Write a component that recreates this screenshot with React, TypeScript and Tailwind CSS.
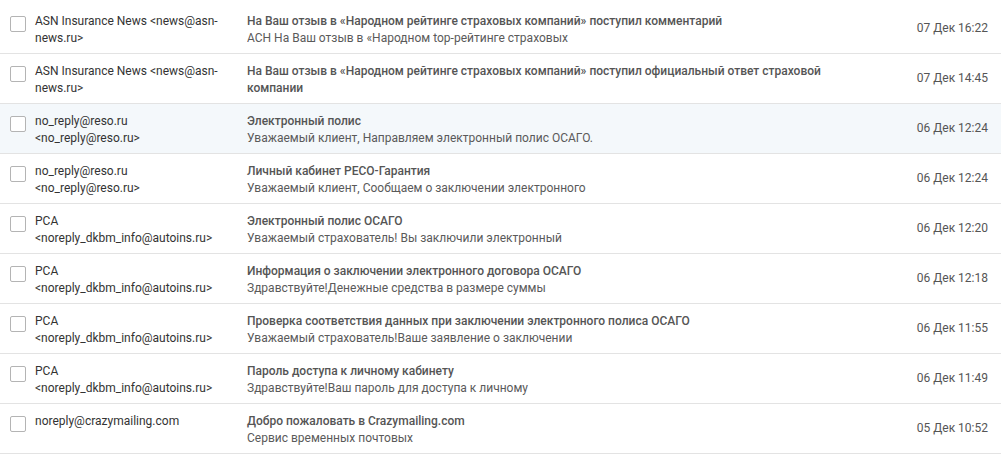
const messages = [
  {
    from: "ASN Insurance News <news@asn-news.ru>",
    subject: "На Ваш отзыв в «Народном рейтинге страховых компаний» поступил комментарий",
    preview: "АСН На Ваш отзыв в «Народном top-рейтинге страховых",
    date: "07 Дек 16:22",
  },
  {
    from: "ASN Insurance News <news@asn-news.ru>",
    subject:
      "На Ваш отзыв в «Народном рейтинге страховых компаний» поступил официальный ответ страховой компании",
    preview: "",
    date: "07 Дек 14:45",
  },
  {
    from: "no_reply@reso.ru <no_reply@reso.ru>",
    subject: "Электронный полис",
    preview: "Уважаемый клиент, Направляем электронный полис ОСАГО.",
    date: "06 Дек 12:24",
    active: true,
  },
  {
    from: "no_reply@reso.ru <no_reply@reso.ru>",
    subject: "Личный кабинет РЕСО-Гарантия",
    preview: "Уважаемый клиент, Сообщаем о заключении электронного",
    date: "06 Дек 12:24",
  },
  {
    from: "РСА <noreply_dkbm_info@autoins.ru>",
    subject: "Электронный полис ОСАГО",
    preview: "Уважаемый страхователь! Вы заключили электронный",
    date: "06 Дек 12:20",
  },
  {
    from: "РСА <noreply_dkbm_info@autoins.ru>",
    subject: "Информация о заключении электронного договора ОСАГО",
    preview: "Здравствуйте!Денежные средства в размере суммы",
    date: "06 Дек 12:18",
  },
  {
    from: "РСА <noreply_dkbm_info@autoins.ru>",
    subject: "Проверка соответствия данных при заключении электронного полиса ОСАГО",
    preview: "Уважаемый страхователь!Ваше заявление о заключении",
    date: "06 Дек 11:55",
  },
  {
    from: "РСА <noreply_dkbm_info@autoins.ru>",
    subject: "Пароль доступа к личному кабинету",
    preview: "Здравствуйте!Ваш пароль для доступа к личному",
    date: "06 Дек 11:49",
  },
  {
    from: "noreply@crazymailing.com",
    subject: "Добро пожаловать в Crazymailing.com",
    preview: "Сервис временных почтовых",
    date: "05 Дек 10:52",
  },
];

const MailRow = ({ m }: { m: (typeof messages)[number] }) => (
  <div
    className={`flex h-[50px] items-start border-b border-[#e3e3e3] ${
      m.active ? "bg-[#f4f8fb]" : "bg-white"
    }`}
  >
    <div className="w-[35px] shrink-0 pl-[10px] pt-[12px]">
      <div className="h-[16px] w-[16px] rounded-[2px] border border-[#b4b4b4] bg-white" />
    </div>
    <div className="w-[212px] shrink-0 pr-[20px] pt-[9px] text-[#333] break-words">
      {m.from}
    </div>
    <div className="min-w-0 flex-1 pr-[40px] pt-[9px]">
      <div className="font-medium text-[#555]">{m.subject}</div>
      {m.preview && <div className="truncate text-[#5a5a5a]">{m.preview}</div>}
    </div>
    <div className="w-[120px] shrink-0 self-center pr-[13px] text-right text-[#555]">
      {m.date}
    </div>
  </div>
);

export default function App() {
  return (
    <div className="min-h-[459px] bg-white pt-[4px] font-['Roboto',sans-serif] text-[12px] leading-[17px]">
      <div className="w-[1001px]">
        {messages.map((m, i) => (
          <MailRow key={i} m={m} />
        ))}
      </div>
    </div>
  );
}
